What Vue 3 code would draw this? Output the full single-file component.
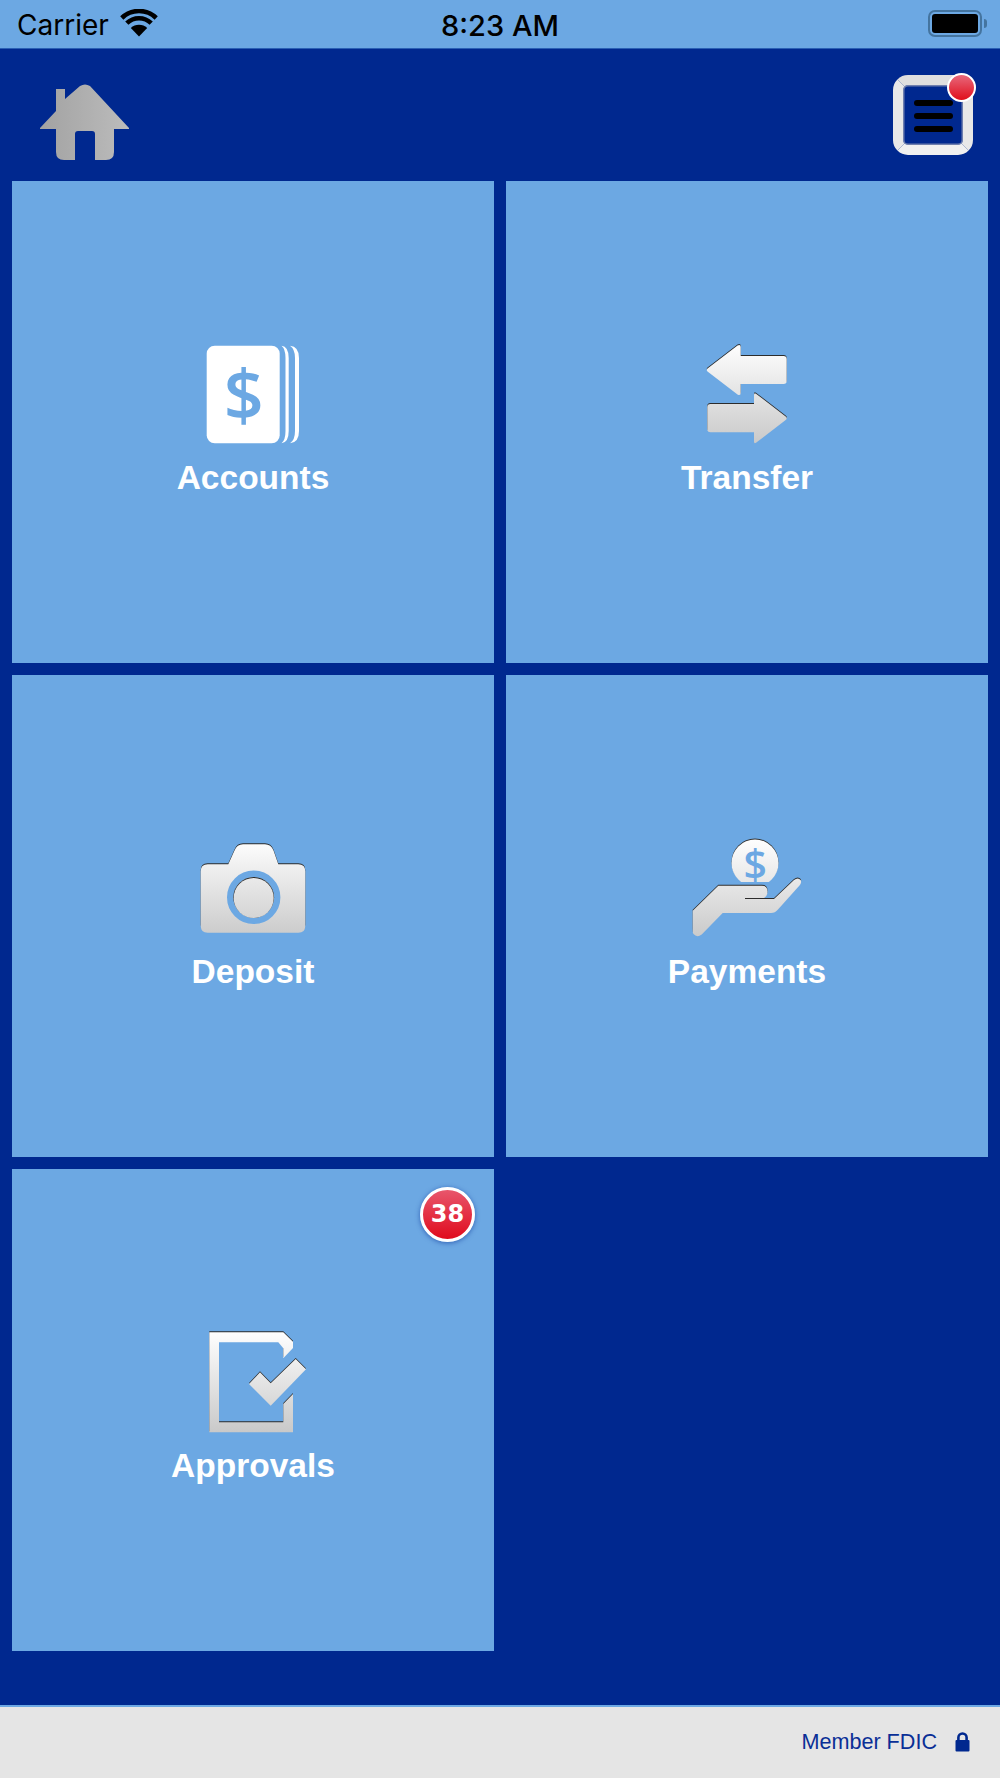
<template>
  <div class="screen">
    <div class="status-bar">
      <div class="status-bar__left">
        <span class="status-bar__carrier">Carrier</span>
        <svg class="status-bar__wifi" width="38" height="28" viewBox="0 0 38 28">
          <path d="M19 27.5 L10.8 19 A12 12 0 0 1 27.2 19 Z" fill="#000" />
          <path d="M6.8 14.2 A17.5 17.5 0 0 1 31.2 14.2" fill="none" stroke="#000" stroke-width="4.6" />
          <path d="M1.8 9 A24.6 24.6 0 0 1 36.2 9" fill="none" stroke="#000" stroke-width="4.6" />
        </svg>
      </div>
      <span class="status-bar__time">8:23 AM</span>
      <div class="battery">
        <div class="battery__body"><div class="battery__level"></div></div>
        <div class="battery__nub"></div>
      </div>
    </div>

    <header class="top-bar">
      <svg class="top-bar__home" width="92" height="80" viewBox="0 0 92 80">
        <defs>
          <linearGradient id="home-fill" x1="0" y1="0" x2="1" y2="0">
            <stop offset="0" stop-color="#a2a2a2" />
            <stop offset="1" stop-color="#bcbcbc" />
          </linearGradient>
        </defs>
        <path
          d="M16 5 H25 V15 L40 2 Q45 -1 50 2 L89 44 V45 H74 V68 Q74 76 66 76 H55 V50 Q55 47 52 47 H38 Q35 47 35 50 V76 H24 Q16 76 16 68 V45 H0 V44 L16 27 Z"
          fill="url(#home-fill)"
        />
      </svg>
      <div class="menu-button">
        <span class="menu-button__line"></span>
        <span class="menu-button__line"></span>
        <span class="menu-button__line"></span>
        <span class="menu-button__dot"></span>
      </div>
    </header>

    <svg class="defs" width="0" height="0">
      <defs>
        <linearGradient id="metal" gradientUnits="userSpaceOnUse" x1="0" y1="5" x2="0" y2="106">
          <stop offset="0" stop-color="#ffffff" />
          <stop offset="1" stop-color="#c9c9c9" />
        </linearGradient>
        <clipPath id="coin-clip">
          <rect x="0" y="0" width="120" height="49" />
        </clipPath>
      </defs>
    </svg>

    <main class="tiles">
      <div v-for="tile in tiles" :key="tile.label" class="tile">
        <span v-if="tile.badge" class="tile__badge">{{ tile.badge }}</span>

        <svg class="tile__icon" width="120" height="110" :viewBox="tile.viewBox">
          <template v-if="tile.icon === 'accounts'">
            <rect x="13.7" y="7.7" width="73" height="97.6" rx="8" fill="#fff" />
            <path d="M88.5 7.7 Q95.7 8.5 95.7 20 V93 Q95.7 104.5 88.5 105.3 Q92.5 102 92.5 93 V20 Q92.5 11 88.5 7.7 Z" fill="#fff" />
            <path d="M97 7.7 Q106 8.5 106 20 V93 Q106 104.5 97 105.3 Q102 102 102 93 V20 Q102 11 97 7.7 Z" fill="#fff" />
            <text class="tile__dollar" x="50.8" y="82" font-size="70">$</text>
          </template>

          <template v-else-if="tile.icon === 'payments'">
            <g clip-path="url(#coin-clip)">
              <circle cx="68" cy="29" r="23.5" fill="#333" />
              <circle cx="68" cy="30" r="23.5" fill="url(#metal)" />
            </g>
            <text class="tile__dollar" x="68.3" y="45.5" font-size="41">$</text>
          </template>

          <template v-for="d in paths[tile.icon]" :key="d">
            <path :d="d" fill="#2c2c2c" transform="translate(0 -1)" />
            <path :d="d" fill="url(#metal)" />
          </template>

          <template v-if="tile.icon === 'deposit'">
            <circle cx="60.7" cy="64.3" r="23.4" fill="none" stroke="#6ca8e3" stroke-width="6.6" />
            <circle cx="60.7" cy="64.3" r="20.4" fill="#2c2c2c" />
            <circle cx="60.7" cy="65" r="20" fill="url(#metal)" />
          </template>

          <path
            v-if="tile.icon === 'payments'"
            d="M58 65.5 H87"
            stroke="#2c2c2c"
            stroke-width="1"
          />
        </svg>

        <span class="tile__label">{{ tile.label }}</span>
      </div>
    </main>

    <footer class="footer">
      <span class="footer__text">Member FDIC</span>
      <svg class="footer__lock" width="15" height="20" viewBox="0 0 15 20">
        <path d="M3.4 9 V5.6 A4.1 4.1 0 0 1 11.6 5.6 V9" fill="none" stroke="#00288f" stroke-width="2.6" />
        <rect x="0.5" y="8" width="14" height="11.5" rx="1" fill="#00288f" />
      </svg>
    </footer>
  </div>
</template>

<script setup>
  const tiles = [
    { label: 'Accounts', icon: 'accounts', viewBox: '0 0 120 110' },
    { label: 'Transfer', icon: 'transfer', viewBox: '0 0 120 110' },
    { label: 'Deposit', icon: 'deposit', viewBox: '0 -1 120 110' },
    { label: 'Payments', icon: 'payments', viewBox: '0 -1 120 110' },
    { label: 'Approvals', icon: 'approvals', viewBox: '0 0 120 110', badge: 38 }
  ]

  // each shape gets a dark copy 1px higher, that is the engraved top edge
  const paths = {
    accounts: [],
    transfer: [
      'M20.5 30.5 L50.5 7.5 Q53.7 6 53.7 9 V18 H96.5 Q99.7 18 99.7 21 V43 Q99.7 46 96.5 46 H53.7 V55 Q53.7 58 50.5 56.5 L20.5 33.5 Q19 32 20.5 30.5 Z',
      'M99 78.7 L69 55.7 Q67 54.4 67 57 V66 H23.5 Q20.3 66 20.3 69 V91.3 Q20.3 94.3 23.5 94.3 H67 V103.5 Q67 106 69 104.8 L99 81.8 Q100.5 80.3 99 78.7 Z'
    ],
    deposit: [
      'M14.7 31.3 H35.3 L41.5 17.5 Q44 11.3 50 11.3 H72 Q78 11.3 80.5 17.5 L85.3 31.3 H105.3 Q112.3 31.3 112.3 38.3 V92.7 Q112.3 99.7 105.3 99.7 H14.7 Q7.7 99.7 7.7 92.7 V38.3 Q7.7 31.3 14.7 31.3 Z'
    ],
    payments: [
      'M5.7 77.7 L31.3 52.7 H75 Q80.5 52.7 80.5 58.5 Q80.5 65.5 74 65.5 H58 V66 H87 L107 47 Q111 44 113.7 47 Q115 50 112.5 52.5 L91 76.5 Q88 80 84 80 H35.7 L14.7 101.5 Q10 105 6.5 101 Q5.7 100 5.7 97 Z'
    ],
    approvals: [
      'M16.3 6.3 H90.3 L100 15.7 V22 L90.3 32.3 V22.3 L85.3 16.3 H26 V96.3 H90.3 V78 L100 68 V106.3 H16.3 Z',
      'M56 58 L67 46.3 L77.7 57.3 L102.7 33 L113 43.3 L77.7 79.7 Z'
    ]
  }
</script>

<style>
  html,
  body {
    margin: 0;
    background: #00288f;
  }
</style>

<style scoped>
  .screen {
    display: flex;
    flex-direction: column;
    width: 1000px;
    height: 1778px;
    overflow: hidden;
    background: #00288f;
    font-family: "Liberation Sans", Arial, sans-serif;
  }

  .status-bar {
    position: relative;
    display: flex;
    align-items: center;
    justify-content: space-between;
    box-sizing: border-box;
    height: 49px;
    padding: 2px 13px 0 17px;
    flex-shrink: 0;
    background: #6ca8e3;
    border-bottom: 1px solid #2a5fb4;
    color: #000;
    font-family: Inter, "Liberation Sans", sans-serif;
  }

  .status-bar__left {
    display: flex;
    align-items: center;
    gap: 11px;
  }

  .status-bar__carrier {
    font-size: 28px;
  }

  .status-bar__wifi {
    margin-top: -4px;
  }

  .status-bar__time {
    position: absolute;
    left: 0;
    right: 0;
    text-align: center;
    font-size: 29px;
    font-weight: 500;
  }

  .battery {
    display: flex;
    align-items: center;
    gap: 2px;
    margin-top: -3px;
  }

  .battery__body {
    box-sizing: border-box;
    width: 54px;
    height: 27px;
    padding: 2px;
    border: 2px solid #44749f;
    border-radius: 7px;
  }

  .battery__level {
    height: 100%;
    border-radius: 3px;
    background: #000;
  }

  .battery__nub {
    width: 3px;
    height: 9px;
    border-radius: 0 3px 3px 0;
    background: #44749f;
  }

  .top-bar {
    display: flex;
    align-items: flex-start;
    justify-content: space-between;
    height: 132px;
    padding: 0 27px 0 40px;
    flex-shrink: 0;
  }

  .top-bar__home {
    margin-top: 35px;
  }

  .menu-button {
    position: relative;
    display: flex;
    flex-direction: column;
    align-items: center;
    gap: 7px;
    box-sizing: border-box;
    width: 80px;
    height: 80px;
    margin-top: 26px;
    padding-top: 15px;
    border: 10px solid #e8e8e8;
    border-top-color: #dfdfdf;
    border-bottom-color: #f0f0f0;
    border-radius: 15px;
    background: #00288f;
    box-shadow: inset 0 0 0 1.5px #6f7fae;
  }

  .menu-button__line {
    width: 39px;
    height: 6px;
    border-radius: 3px;
    background: #000;
  }

  .menu-button__dot {
    position: absolute;
    top: -12px;
    right: -13px;
    box-sizing: border-box;
    width: 29px;
    height: 29px;
    border: 2px solid #fff;
    border-radius: 50%;
    background: linear-gradient(#e8687c, #e00f1c);
  }

  .defs {
    position: absolute;
  }

  .tiles {
    display: grid;
    grid-template-columns: 482px 482px;
    grid-auto-rows: 482px;
    gap: 12px;
    padding: 0 12px;
  }

  .tile {
    position: relative;
    display: flex;
    flex-direction: column;
    align-items: center;
    padding-top: 157px;
    background: #6ca8e3;
  }

  .tile__icon {
    display: block;
    flex-shrink: 0;
  }

  .tile__dollar {
    fill: #6ca8e3;
    font-family: "Open Sans", sans-serif;
    font-weight: 600;
    text-anchor: middle;
  }

  .tile__label {
    margin-top: 11px;
    color: #fff;
    font-size: 33.5px;
    font-weight: 700;
    line-height: 38px;
  }

  .tile__badge {
    position: absolute;
    top: 18px;
    right: 19px;
    box-sizing: border-box;
    width: 55px;
    height: 55px;
    border: 3px solid #fff;
    border-radius: 50%;
    background: linear-gradient(#e8566c, #e00b1d);
    box-shadow: 0 1px 5px rgba(0, 40, 143, 0.55);
    color: #fff;
    font-family: "DejaVu Sans", sans-serif;
    font-size: 24px;
    font-weight: 700;
    line-height: 49px;
    text-align: center;
  }

  .footer {
    display: flex;
    align-items: center;
    justify-content: flex-end;
    gap: 18px;
    box-sizing: border-box;
    height: 73px;
    margin-top: auto;
    padding: 0 30px 2px 0;
    border-top: 2px solid #6ca8e3;
    background: #e5e5e5;
  }

  .footer__text {
    color: #0a2f96;
    font-size: 21.6px;
  }
</style>
